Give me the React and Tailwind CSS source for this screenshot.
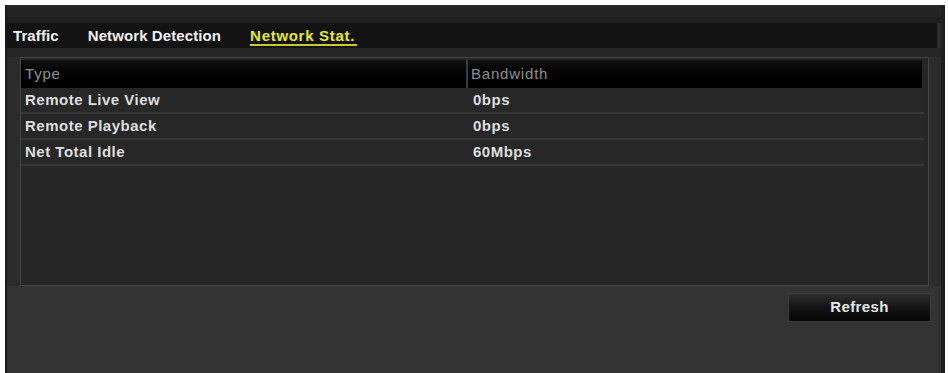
const rows = [
  { type: "Remote Live View", bw: "0bps" },
  { type: "Remote Playback", bw: "0bps" },
  { type: "Net Total Idle", bw: "60Mbps" },
];

const tabs = [
  { name: "Traffic", active: false },
  { name: "Network Detection", active: false },
  { name: "Network Stat.", active: true },
];

export default function App() {
  return (
    <div
      className="w-[948px] h-[373px] bg-white pt-[5px] pl-[5px] pr-[3px] overflow-hidden"
      style={{ fontFamily: '"Liberation Sans", Arial, sans-serif' }}
    >
      <div className="h-full flex flex-col bg-[#2f2f2f] border-l-2 border-l-[#1a1a1a] border-r-4 border-r-[#1f1f1f]">
        {/* top strip */}
        <div className="h-[18px] bg-gradient-to-b from-[#262626] to-[#1e1e1e]" />

        {/* tab bar */}
        <div className="h-[25px] mr-[4px] bg-[#131313] flex items-center gap-[29px] pl-[6px]">
          {tabs.map((t) => (
            <span
              key={t.name}
              className={
                t.active
                  ? "text-[15px] font-bold tracking-[0.7px] pr-[2px] text-[#e8e82a] border-b-2 border-[#c9c930] leading-[17px] mt-[2px]"
                  : "text-[15px] font-bold tracking-[0.1px] text-[#f0f0f0] leading-[17px]"
              }
            >
              {t.name}
            </span>
          ))}
        </div>

        <div className="h-[9px] bg-[#262626]" />

        {/* table */}
        <div className="flex flex-col bg-[#2c2c2c]">
          <div className="ml-[13px] mr-[12px] h-[229px] border border-[#444] bg-[#262626] flex flex-col">
            <div className="flex h-[28px] mt-[2px] mr-[6px] bg-gradient-to-b from-[#111] to-[#000] text-[15px] tracking-[0.8px] text-[#8f8f8f]">
              <div className="w-[447px] pl-[4px] flex items-center border-r-2 border-[#3c3c3c]">
                Type
              </div>
              <div className="flex-1 pl-[3px] flex items-center">Bandwidth</div>
            </div>
            {rows.map((r) => (
              <div
                key={r.type}
                className="flex h-[26px] mr-[4px] bg-[#272727] border-b-2 border-[#373737] text-[15px] font-bold tracking-[0.5px] text-[#dedede]"
              >
                <div className="w-[449px] pl-[4px] flex items-center">{r.type}</div>
                <div className="flex-1 pl-[3px] flex items-center">{r.bw}</div>
              </div>
            ))}
          </div>
        </div>

        {/* bottom area */}
        <div className="flex-1 bg-[#333333] flex justify-end items-start pt-[7px] pr-[10px]">
          <button className="w-[143px] h-[29px] rounded-[2px] border border-[#3c3c3c] bg-gradient-to-b from-[#2e2e2e] via-[#141414] to-[#070707] text-[15px] font-bold tracking-[0.4px] text-[#e6e6e6]">
            Refresh
          </button>
        </div>
      </div>
    </div>
  );
}
